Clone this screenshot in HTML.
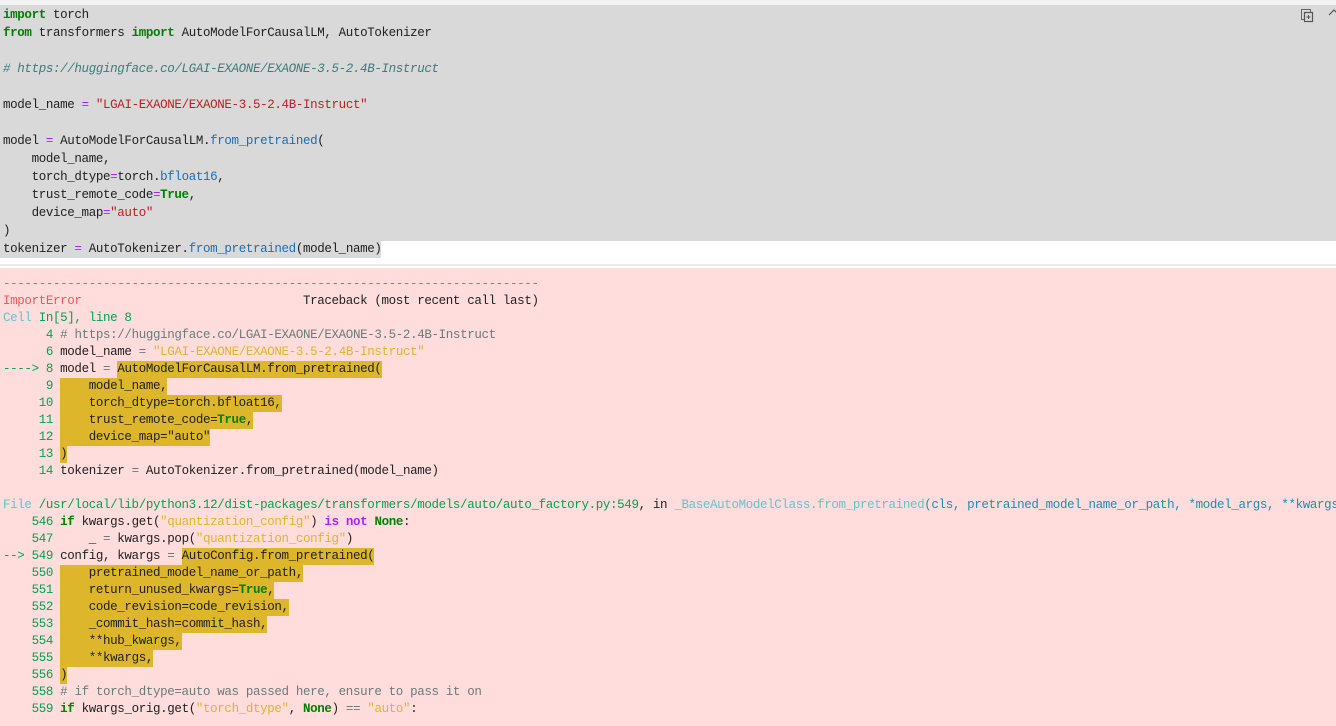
<!DOCTYPE html>
<html><head><meta charset="utf-8"><style>
body{margin:0;width:1336px;height:726px;overflow:hidden;background:#fff;font-family:"Liberation Mono",monospace;font-size:12.5px;letter-spacing:-0.36px;color:#212121}
pre{margin:0;font-family:inherit;font-size:inherit;white-space:pre}
.top{position:absolute;left:0;top:0;width:1336px;height:5px;background:#f3f3f3;border-bottom:1px solid #e4e4e4}
.code{position:absolute;left:0;top:5px;width:1336px;height:236px;background:#d9d9d9}
.tokbg{position:absolute;left:0;top:241px;width:381px;height:17px;background:#d9d9d9}
.sep{position:absolute;left:0;top:264px;width:1336px;height:2px;background:#ececec}
.out{position:absolute;left:0;top:268px;width:1336px;height:458px;background:#ffdddd}
.out pre{position:absolute;left:3px;top:8px;line-height:17px}
.k{color:#008000;font-weight:bold}.s{color:#ba2121}.c{color:#3d7b7b;font-style:italic}.o{color:#aa22ff}.f{color:#0000ff}.n{color:#1a6fb0}
.r{color:#e75c58}.cy{color:#60c6c8}.g{color:#00a250}.y{color:#ddb62b}.gr{color:#6b7a7a}.p{color:#aa22ff;font-weight:bold}.gb{color:#008000;font-weight:bold}
.h{background:#ddb62b;display:inline-block;height:17px}
.fn{color:#1a8fb0}
.icons{position:absolute;top:6px;left:1300px}
</style></head><body>
<div class="top"></div>
<div class="code"></div>
<div class="tokbg"></div>
<div style="position:absolute;left:0;top:6px"><pre style="position:absolute;left:3px;top:0;line-height:18px"><span class="k">import</span> torch
<span class="k">from</span> transformers <span class="k">import</span> AutoModelForCausalLM, AutoTokenizer

<span class="c"># https://huggingface.co/LGAI-EXAONE/EXAONE-3.5-2.4B-Instruct</span>

model_name <span class="o">=</span> <span class="s">"LGAI-EXAONE/EXAONE-3.5-2.4B-Instruct"</span>

model <span class="o">=</span> AutoModelForCausalLM.<span class="n">from_pretrained</span>(
    model_name,
    torch_dtype<span class="o">=</span>torch.<span class="n">bfloat16</span>,
    trust_remote_code<span class="o">=</span><span class="k">True</span>,
    device_map<span class="o">=</span><span class="s">"auto"</span>
)
tokenizer <span class="o">=</span> AutoTokenizer.<span class="n">from_pretrained</span>(model_name)</pre></div>
<svg class="icons" width="40" height="18" viewBox="0 0 40 18"><rect x="1.5" y="3.5" width="9" height="10" fill="none" stroke="#666" stroke-width="1"/><rect x="4.5" y="6.5" width="8" height="9" fill="#d9d9d9" stroke="#555" stroke-width="1.2"/><path d="M8.5 9v4M6.5 11h4" stroke="#555"/><path d="M29 9l5-5l3 3" fill="none" stroke="#555" stroke-width="1.2"/></svg>
<div class="sep"></div>
<div class="out"><pre><span class="r">---------------------------------------------------------------------------</span>
<span class="r">ImportError</span>                               Traceback (most recent call last)
<span class="cy">Cell</span><span class="g"> In[5], line 8</span>
<span class="g">      4</span> <span class="gr"># https://huggingface.co/LGAI-EXAONE/EXAONE-3.5-2.4B-Instruct</span>
<span class="g">      6</span> model_name <span class="gr">=</span> <span class="y">"LGAI-EXAONE/EXAONE-3.5-2.4B-Instruct"</span>
<span class="g">----&gt; 8</span> model <span class="gr">=</span> <span class="h">AutoModelForCausalLM.from_pretrained(</span>
<span class="g">      9</span> <span class="h">    model_name,</span>
<span class="g">     10</span> <span class="h">    torch_dtype=torch.bfloat16,</span>
<span class="g">     11</span> <span class="h">    trust_remote_code=<span class="gb">True</span>,</span>
<span class="g">     12</span> <span class="h">    device_map="auto"</span>
<span class="g">     13</span> <span class="h">)</span>
<span class="g">     14</span> tokenizer <span class="gr">=</span> AutoTokenizer.from_pretrained(model_name)

<span class="cy">File </span><span class="g">/usr/local/lib/python3.12/dist-packages/transformers/models/auto/auto_factory.py:549</span>, in <span class="cy">_BaseAutoModelClass.from_pretrained</span><span class="fn">(cls, pretrained_model_name_or_path, *model_args, **kwargs)</span>
<span class="g">    546</span> <span class="gb">if</span> kwargs.get(<span class="y">"quantization_config"</span>) <span class="p">is</span> <span class="p">not</span> <span class="gb">None</span>:
<span class="g">    547</span>     _ <span class="gr">=</span> kwargs.pop(<span class="y">"quantization_config"</span>)
<span class="g">--&gt; 549</span> config, kwargs <span class="gr">=</span> <span class="h">AutoConfig.from_pretrained(</span>
<span class="g">    550</span> <span class="h">    pretrained_model_name_or_path,</span>
<span class="g">    551</span> <span class="h">    return_unused_kwargs=<span class="gb">True</span>,</span>
<span class="g">    552</span> <span class="h">    code_revision=code_revision,</span>
<span class="g">    553</span> <span class="h">    _commit_hash=commit_hash,</span>
<span class="g">    554</span> <span class="h">    **hub_kwargs,</span>
<span class="g">    555</span> <span class="h">    **kwargs,</span>
<span class="g">    556</span> <span class="h">)</span>
<span class="g">    558</span> <span class="gr"># if torch_dtype=auto was passed here, ensure to pass it on</span>
<span class="g">    559</span> <span class="gb">if</span> kwargs_orig.get(<span class="y">"torch_dtype"</span>, <span class="gb">None</span>) <span class="gr">==</span> <span class="y">"auto"</span>:</pre></div>
</body></html>
